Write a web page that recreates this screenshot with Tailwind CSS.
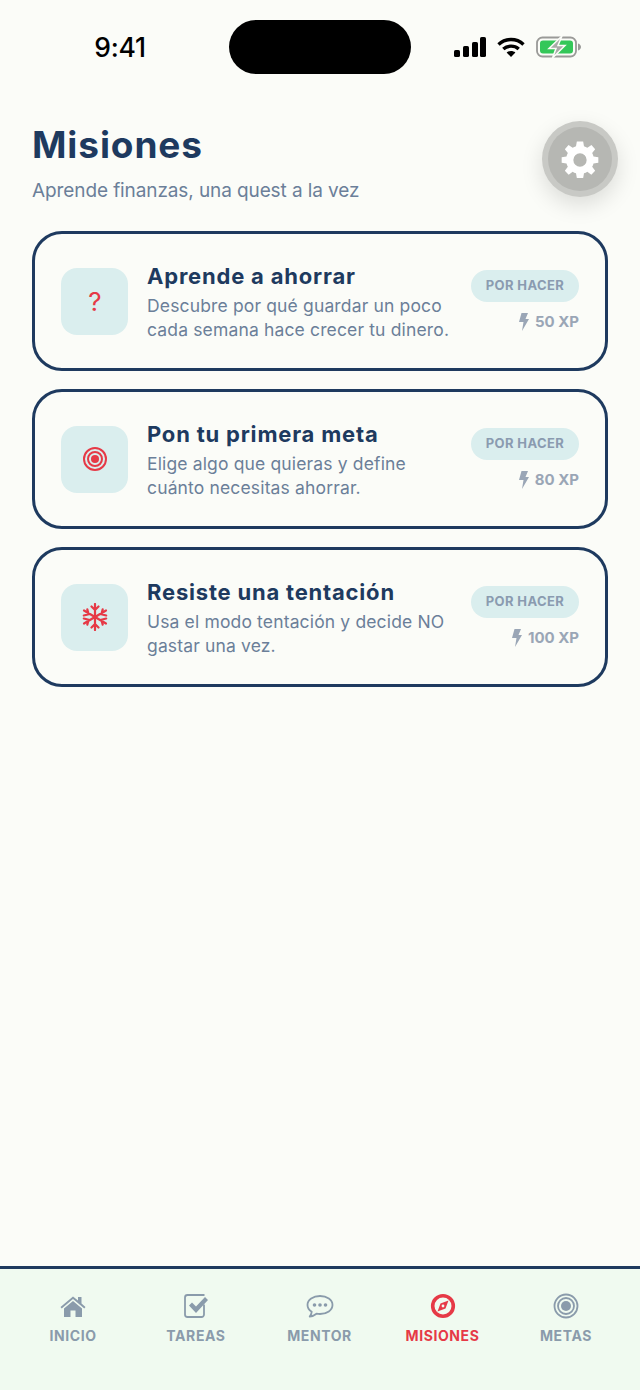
<!DOCTYPE html>
<html lang="es">
<head>
<meta charset="utf-8">
<script src="https://cdn.jsdelivr.net/npm/@tailwindcss/browser@4"></script>
</head>
<body class="m-0">
<div class="relative flex flex-col w-[640px] h-[1390px] overflow-hidden bg-[#fbfcf8] font-['Inter','Liberation_Sans',sans-serif]">
  <!-- status bar -->
  <div class="flex items-center h-[54px] mt-[20px] shrink-0">
    <div class="w-[229px] pl-[11px] text-center text-[26.5px] leading-[54px] font-medium text-black tracking-[-0.2px]">9:41</div>
    <div class="w-[182px] h-[54px] rounded-full bg-black"></div>
    <div class="flex items-center gap-[11px] pl-[42px]">
      <svg width="33" height="20" viewBox="0 0 33 20" fill="#000"><rect x="1" y="13" width="6" height="7" rx="1.6"/><rect x="10" y="9" width="6" height="11" rx="1.6"/><rect x="19" y="5" width="6" height="15" rx="1.6"/><rect x="27" y="0" width="6" height="20" rx="1.6"/></svg>
      <svg width="28" height="20" viewBox="0 0 28 20" fill="none" stroke="#000" stroke-width="3.400"><path d="M1.500 7.500C8.500 .9 19.500 .9 26.500 7.500"/><path d="M6.300 12C10.500 8.200 17.500 8.200 21.700 12"/><path d="M14 20l-4.400-4.600c2.500-2 6.300-2 8.800 0z" fill="#000" stroke="none"/></svg>
      <svg width="46" height="22" viewBox="0 0 46 22" fill="none"><rect x="1" y="1.500" width="39" height="19" rx="5.500" stroke="#9a9a98" stroke-width="1.800"/><rect x="4" y="4.500" width="33" height="13" rx="3" fill="#34c759"/><path d="M42 7.500c2 .6 3 2 3 3.500s-1 2.900-3 3.500z" fill="#9a9a98"/><path d="M26 0 13 12.500h7L16.500 22 29 9.500h-7z" fill="#a9aaa8" stroke="#fbfcf8" stroke-width="1.500"/></svg>
    </div>
  </div>

  <!-- header -->
  <div class="pl-[32px] pt-[46px] shrink-0">
    <h1 class="text-[37px] leading-[50px] font-bold text-[#1e3a5f] tracking-[0.9px]">Misiones</h1>
    <p class="text-[19px] leading-[26px] mt-[8px] text-[#6b7f99] tracking-[-0.1px]">Aprende finanzas, una quest a la vez</p>
  </div>

  <!-- settings floating button -->
  <div class="absolute left-[542px] top-[121px] w-[76px] h-[76px] rounded-full bg-[#c8c9c5] flex items-center justify-center shadow-[0_8px_22px_rgba(0,0,0,0.13)]">
    <div class="w-[64px] h-[64px] rounded-full bg-[#b6b7b3] flex items-center justify-center">
      <svg width="40" height="40" viewBox="0 0 24 24" fill="#fff"><path fill-rule="evenodd" d="M13.900 1.500h-3.800l-.5 2.900a8 8 0 0 0-2 .9L5.100 3.600 2.900 6.100l1.800 2.300a8 8 0 0 0-.8 2.100L1 11v3.300l2.900.4c.2.700.5 1.400.8 2l-1.800 2.400 2.300 2.300 2.400-1.800c.6.400 1.300.7 2 .9l.5 2.900h3.800l.5-2.900c.7-.2 1.400-.5 2-.9l2.400 1.800 2.300-2.300-1.800-2.400c.4-.6.6-1.300.8-2l2.900-.4V11l-2.900-.5a8 8 0 0 0-.8-2.100l1.800-2.300-2.200-2.500-2.500 1.700a8 8 0 0 0-2-.9zM12 8.600a4 4 0 1 1 0 8 4 4 0 0 1 0-8z"/></svg>
    </div>
  </div>

  <!-- cards -->
  <div class="flex flex-col gap-[18px] px-[32px] mt-[27px] flex-1">
    <div class="flex items-center h-[140px] border-[3px] border-[#1e3a5f] rounded-[30px] pl-[26px] pr-[26px]">
      <div class="w-[67px] h-[67px] pl-px rounded-[16px] bg-[#daeeee] flex items-center justify-center shrink-0 text-[26px] text-[#e63946]">?</div>
      <div class="ml-[19px] w-[312px] shrink-0 pt-px">
        <div class="text-[22px] leading-[30px] font-bold text-[#1e3a5f] tracking-[0.8px]">Aprende a ahorrar</div>
        <div class="text-[17.5px] leading-[24px] mt-[3px] text-[#6b7f99] tracking-[0.15px] whitespace-nowrap">Descubre por qué guardar un poco<br>cada semana hace crecer tu dinero.</div>
      </div>
      <div class="flex-1 flex flex-col items-end gap-[10px] -mt-px">
        <div class="w-[108px] h-[32px] pt-px rounded-full bg-[#daeeee] flex items-center justify-center text-[13px] font-bold text-[#8a9bb0] tracking-[0.4px] whitespace-nowrap">POR HACER</div>
        <div class="flex items-center gap-[6px] text-[15px] leading-[20px] font-bold text-[#9aa6b6]">
          <svg width="10" height="18" viewBox="0 0 10 18" fill="#9aa6b6"><path d="M2.500 0H9L6.500 6H10L3 18l1.500-9H0z"/></svg>50 XP
        </div>
      </div>
    </div>

    <div class="flex items-center h-[140px] border-[3px] border-[#1e3a5f] rounded-[30px] pl-[26px] pr-[26px]">
      <div class="w-[67px] h-[67px] rounded-[16px] bg-[#daeeee] flex items-center justify-center shrink-0">
        <svg width="24" height="24" viewBox="0 0 24 24" fill="none" stroke="#e63946"><circle cx="12" cy="12" r="11" stroke-width="2"/><circle cx="12" cy="12" r="7" stroke-width="2"/><circle cx="12" cy="12" r="4" fill="#e63946" stroke="none"/></svg>
      </div>
      <div class="ml-[19px] w-[312px] shrink-0 pt-px">
        <div class="text-[22px] leading-[30px] font-bold text-[#1e3a5f] tracking-[0.8px]">Pon tu primera meta</div>
        <div class="text-[17.5px] leading-[24px] mt-[3px] text-[#6b7f99] tracking-[0.15px] whitespace-nowrap">Elige algo que quieras y define<br>cuánto necesitas ahorrar.</div>
      </div>
      <div class="flex-1 flex flex-col items-end gap-[10px] -mt-px">
        <div class="w-[108px] h-[32px] pt-px rounded-full bg-[#daeeee] flex items-center justify-center text-[13px] font-bold text-[#8a9bb0] tracking-[0.4px] whitespace-nowrap">POR HACER</div>
        <div class="flex items-center gap-[6px] text-[15px] leading-[20px] font-bold text-[#9aa6b6]">
          <svg width="10" height="18" viewBox="0 0 10 18" fill="#9aa6b6"><path d="M2.500 0H9L6.500 6H10L3 18l1.500-9H0z"/></svg>80 XP
        </div>
      </div>
    </div>

    <div class="flex items-center h-[140px] border-[3px] border-[#1e3a5f] rounded-[30px] pl-[26px] pr-[26px]">
      <div class="w-[67px] h-[67px] rounded-[16px] bg-[#daeeee] flex items-center justify-center shrink-0">
        <svg width="26" height="28" viewBox="0 0 26 28" fill="none" stroke="#e63946" stroke-width="2.200" stroke-linecap="round"><path d="M13 1v26M9.500 3.500l3.500 3.500 3.500-3.500M9.500 24.500l3.500-3.500 3.500 3.500"/><path d="M2 7.500l22 13M1.800 12.500l4.800-1.300-1.300-4.800M24.200 15.500l-4.800 1.300 1.300 4.800"/><path d="M2 20.500l22-13M5.300 21.600l1.300-4.800-4.800-1.300M20.700 6.400l-1.300 4.800 4.800 1.300"/></svg>
      </div>
      <div class="ml-[19px] w-[312px] shrink-0 pt-px">
        <div class="text-[22px] leading-[30px] font-bold text-[#1e3a5f] tracking-[0.8px]">Resiste una tentación</div>
        <div class="text-[17.5px] leading-[24px] mt-[3px] text-[#6b7f99] tracking-[0.15px] whitespace-nowrap">Usa el modo tentación y decide NO<br>gastar una vez.</div>
      </div>
      <div class="flex-1 flex flex-col items-end gap-[10px] -mt-px">
        <div class="w-[108px] h-[32px] pt-px rounded-full bg-[#daeeee] flex items-center justify-center text-[13px] font-bold text-[#8a9bb0] tracking-[0.4px] whitespace-nowrap">POR HACER</div>
        <div class="flex items-center gap-[6px] text-[15px] leading-[20px] font-bold text-[#9aa6b6]">
          <svg width="10" height="18" viewBox="0 0 10 18" fill="#9aa6b6"><path d="M2.500 0H9L6.500 6H10L3 18l1.500-9H0z"/></svg>100 XP
        </div>
      </div>
    </div>
  </div>

  <!-- tab bar -->
  <div class="h-[124px] shrink-0 bg-[#f0faf0] border-t-[3px] border-[#1e3a5f] flex pl-[11px] pr-[11px] pt-[24px] text-[14px] leading-[20px] font-bold text-[#8a9bab] tracking-[0.6px]">
    <div class="w-[124px] flex flex-col items-center gap-[7px]">
      <svg class="h-[26px]" width="26" height="26" viewBox="0 0 26 26" fill="#8a9bab"><path d="M13 3.500 0.500 14l1.200 1.500L13 6l11.300 9.500 1.200-1.500-4-3.400V4h-3.500v3.600z"/><path d="M13 8 4 15.500V24h6.500v-6.500h5V24H22v-8.500z"/></svg>
      <span>INICIO</span>
    </div>
    <div class="w-[122px] flex flex-col items-center gap-[7px]">
      <svg class="h-[26px]" width="26" height="26" viewBox="0 0 26 26" fill="none"><path d="M21 11.500V21.500a2.500 2.500 0 0 1-2.500 2.500h-14A2.500 2.500 0 0 1 2 21.500v-17A2.500 2.500 0 0 1 4.500 2h17" stroke="#8a9bab" stroke-width="1.800"/><path d="M6 12.500l3-3 4 4L22 4l3 3-12 13z" fill="#8a9bab"/></svg>
      <span>TAREAS</span>
    </div>
    <div class="w-[125px] flex flex-col items-center gap-[7px]">
      <svg class="h-[26px]" width="28" height="26" viewBox="0 0 28 26" fill="none"><path d="M14 3C7.100 3 1.500 6.900 1.500 12c0 2.700 1.600 5.100 4.200 6.800-.2 1.800-1 3.400-2 4.700 2.600-.3 5-1.300 6.800-2.800 1.100.2 2.300.3 3.500.3 6.900 0 12.500-3.900 12.500-9S20.900 3 14 3z" stroke="#8a9bab" stroke-width="1.800" stroke-linejoin="round"/><circle cx="8.500" cy="12" r="1.800" fill="#8a9bab"/><circle cx="14" cy="12" r="1.800" fill="#8a9bab"/><circle cx="19.500" cy="12" r="1.800" fill="#8a9bab"/></svg>
      <span>MENTOR</span>
    </div>
    <div class="w-[121px] flex flex-col items-center gap-[7px] text-[#e63946]">
      <svg class="h-[26px]" width="26" height="26" viewBox="0 0 26 26" fill="none"><circle cx="13" cy="13" r="10.300" stroke="#e63946" stroke-width="3.600"/><path d="M18.500 7.500l-3 8-8 3 3-8z" fill="#e63946"/><circle cx="13" cy="13" r="1.400" fill="#f0faf0"/></svg>
      <span>MISIONES</span>
    </div>
    <div class="w-[126px] flex flex-col items-center gap-[7px]">
      <svg class="h-[26px]" width="26" height="26" viewBox="0 0 26 26" fill="none" stroke="#8a9bab"><circle cx="13" cy="13" r="11.500" stroke-width="1.800"/><circle cx="13" cy="13" r="8" stroke-width="1.800"/><circle cx="13" cy="13" r="5" fill="#8a9bab" stroke="none"/></svg>
      <span>METAS</span>
    </div>
  </div>
</div>
</body>
</html>
